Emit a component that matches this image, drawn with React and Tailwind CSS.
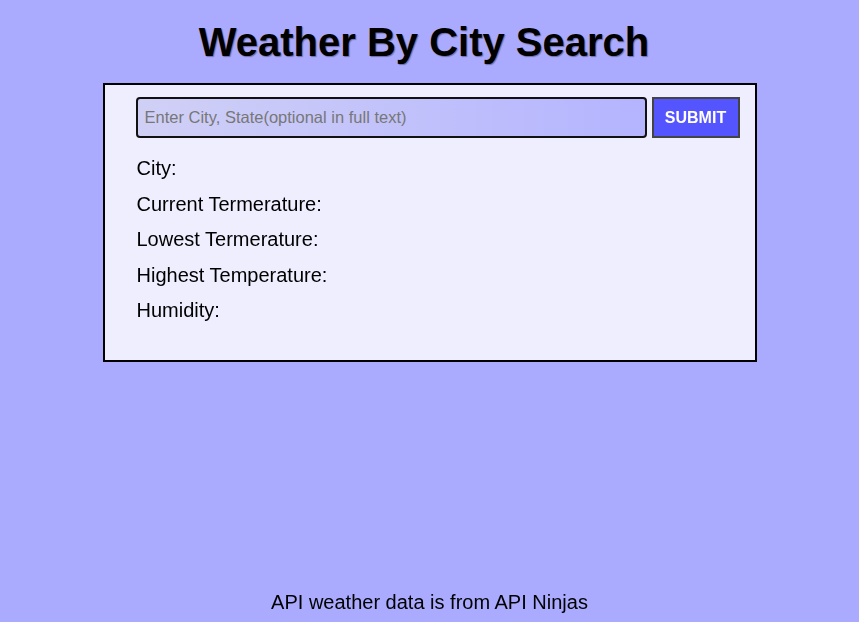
const fields = [
  "City:",
  "Current Termerature:",
  "Lowest Termerature:",
  "Highest Temperature:",
  "Humidity:",
];

export default function App() {
  return (
    <div className="min-h-screen flex flex-col bg-[#aaaaff] text-black font-['Liberation_Sans',Arial,sans-serif]">
      <main className="flex-1 flex flex-col items-center">
        {/* TITLE */}
        <h1 className="mt-[19px] mr-[11px] text-[40px] leading-[46px] font-bold [text-shadow:1px_1px_1px_rgba(0,0,0,0.35)]">
          Weather By City Search
        </h1>

        {/* CARD */}
        <div className="mt-[18px] w-[654px] h-[279px] border-2 border-black bg-[#eeeeff] pl-[31px] pr-[15px] pt-[12px]">
          <form className="flex gap-[5px]" onSubmit={(e) => e.preventDefault()}>
            <input
              type="text"
              autoFocus
              placeholder="Enter City, State(optional in full text)"
              className="flex-1 h-[41px] rounded-[4px] border-2 border-[#111] bg-gradient-to-r from-[#d0d0f6] to-[#b4b4ff] pl-[7px] text-[16.5px] placeholder:text-[#777] outline-none"
            />
            <button
              type="submit"
              className="w-[88px] h-[41px] border-2 border-[#444] bg-[#5555ff] text-white text-[16px] font-bold"
            >
              SUBMIT
            </button>
          </form>

          <div className="mt-[19px] ml-px flex flex-col gap-[12.5px] text-[20px] leading-[23px]">
            {fields.map((f) => (
              <p key={f}>{f}</p>
            ))}
          </div>
        </div>
      </main>

      {/* FOOTER */}
      <footer className="pb-[8px] text-center text-[20px] leading-[23px]">
        API weather data is from API Ninjas
      </footer>
    </div>
  );
}
